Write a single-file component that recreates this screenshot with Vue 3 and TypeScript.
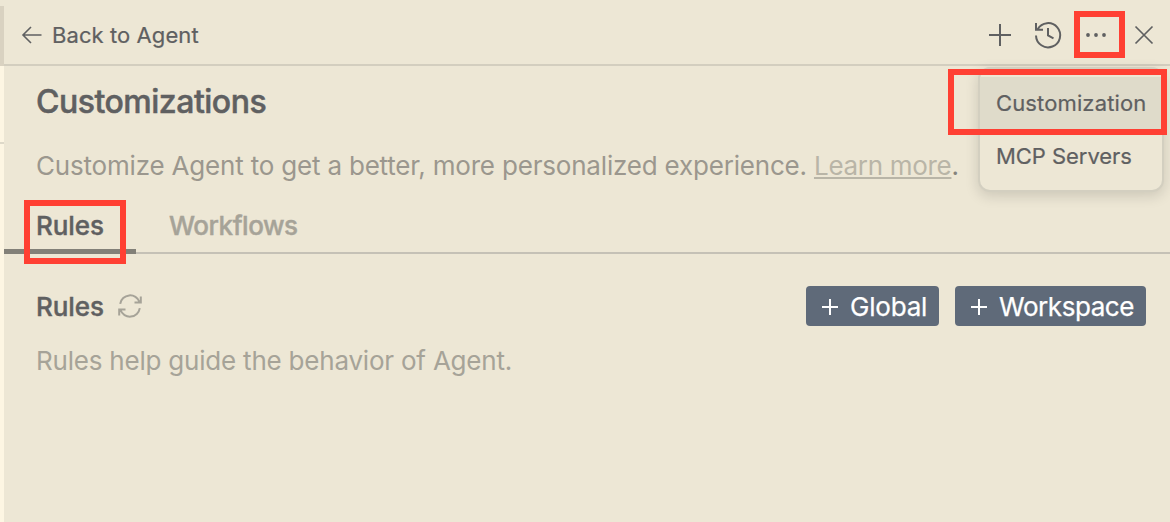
<script setup lang="ts">
    import { ref } from 'vue';

    const tabs = ['Rules', 'Workflows'];
    const menuItems = ['Customization', 'MCP Servers'];

    const activeTab = ref<string>('Rules');
    const activeItem = ref<string>('Customization');
    const menuOpen = ref<boolean>(true);

    const toggleMenu = () => {
        menuOpen.value = !menuOpen.value;
    }
</script>

<template>
    <div class="window">
        <div class="editor-edge">
            <div class="edge-top"></div>
            <div class="edge-body"></div>
        </div>
        <div class="panel">
            <header class="header">
                <div class="back">
                    <svg class="back-icon" width="20" height="18" viewBox="0 0 20 18">
                        <path d="M19.5 9H1M9 1L1 9L9 17" />
                    </svg>
                    <span class="back-text">Back to Agent</span>
                </div>
                <div class="actions">
                    <svg class="icon" width="22" height="22" viewBox="0 0 22 22">
                        <path d="M11 0V22M0 11H22" />
                    </svg>
                    <svg class="icon history" width="28" height="28" viewBox="0 0 28 28">
                        <path d="M2 14.5A12.1 12.1 0 1 0 3.6 8.2M2 2V8.8H9M14 7V14.5L19.5 17.4" />
                    </svg>
                    <svg class="icon dots" width="20" height="6" viewBox="0 0 20 6" @click="toggleMenu">
                        <circle cx="2" cy="3" r="1.9" />
                        <circle cx="10" cy="3" r="1.9" />
                        <circle cx="18" cy="3" r="1.9" />
                    </svg>
                    <svg class="icon close" width="18" height="18" viewBox="0 0 18 18">
                        <path d="M.5 .5L17.5 17.5M17.5 .5L.5 17.5" />
                    </svg>
                </div>
            </header>

            <section class="intro">
                <h1 class="title">Customizations</h1>
                <p class="description">Customize Agent to get a better, more personalized experience. <a class="link">Learn more</a><span class="stop">.</span></p>
            </section>

            <nav class="tabs">
                <div
                    v-for="tab in tabs"
                    :key="tab"
                    class="tab"
                    :class="{ active: tab === activeTab }"
                    @click="activeTab = tab"
                >
                    <span>{{ tab }}</span>
                </div>
            </nav>

            <section class="rules">
                <div class="rules-row">
                    <h2 class="rules-title">Rules</h2>
                    <svg class="refresh" width="24" height="22" viewBox="0 0 24 22">
                        <path d="M2.2 8.8A10 10 0 0 1 21.5 7M22.8 1.5V7.5H16.5M21.8 13.2A10 10 0 0 1 2.5 15M1.2 20.5V14.5H7.5" />
                    </svg>
                    <div class="buttons">
                        <button class="button">
                            <svg class="plus" width="16" height="16" viewBox="0 0 16 16"><path d="M8 0V16M0 8H16" /></svg>
                            <span class="global">Global</span>
                        </button>
                        <button class="button">
                            <svg class="plus" width="16" height="16" viewBox="0 0 16 16"><path d="M8 0V16M0 8H16" /></svg>
                            <span class="workspace">Workspace</span>
                        </button>
                    </div>
                </div>
                <p class="rules-text">Rules help guide the behavior of Agent.</p>
            </section>
        </div>

        <div v-if="menuOpen" class="menu">
            <div
                v-for="item in menuItems"
                :key="item"
                class="menu-item"
                :class="{ selected: item === activeItem }"
                @click="activeItem = item"
            >
                <span>{{ item }}</span>
            </div>
        </div>

        <div class="mark mark-dots"></div>
        <div class="mark mark-menu"></div>
        <div class="mark mark-tab"></div>
    </div>
</template>

<style>
    body {
        margin: 0;
        background: #ede7d5;
    }
</style>

<style scoped>
    .window {
        position: relative;
        box-sizing: border-box;
        width: 1170px;
        height: 522px;
        display: flex;
        overflow: hidden;
        background: #ede7d5;
        color: #5f6061;
        font-family: Inter, "Liberation Sans", sans-serif;
    }

    .editor-edge {
        width: 4px;
        padding-top: 6px;
        box-sizing: border-box;
        display: flex;
        flex-direction: column;
    }

    .edge-top {
        height: 60px;
        background: #d9d2c1;
    }

    .edge-body {
        flex: 1;
        background: linear-gradient(#ded9c9, #ded9c9) 0 76px / 4px 2px no-repeat #fdf6e3;
    }

    .panel {
        flex: 1;
        min-width: 0;
    }

    .header {
        box-sizing: border-box;
        height: 66px;
        padding: 4px 17px 0 18px;
        border-bottom: 2px solid #d3cebf;
        display: flex;
        justify-content: space-between;
        align-items: center;
    }

    .back {
        display: flex;
        align-items: center;
        gap: 10px;
        padding-top: 2px;
    }

    .back-text {
        font-size: 22px;
        line-height: 28px;
        letter-spacing: 0.08px;
        -webkit-text-stroke: 0.2px;
    }

    svg {
        display: block;
        flex: none;
        overflow: visible;
        fill: none;
        stroke: #5f6061;
        stroke-width: 2;
    }

    .back-icon {
        stroke-width: 1.6;
    }

    .actions {
        display: flex;
        align-items: center;
        padding-top: 2px;
    }

    .history {
        margin-left: 23px;
    }

    .dots {
        margin-left: 24px;
        fill: #5f6061;
        stroke: none;
    }

    .close {
        margin-left: 29px;
        stroke-width: 1.7;
    }

    .intro {
        padding: 16px 32px 0;
    }

    h1, h2, p {
        margin: 0;
    }

    .title {
        font-size: 32px;
        line-height: 40px;
        font-weight: 500;
        letter-spacing: -0.5px;
        -webkit-text-stroke: 0.5px;
    }

    .description {
        margin-top: 28px;
        font-size: 26px;
        line-height: 32px;
        letter-spacing: -0.19px;
        white-space: nowrap;
        color: #9b978e;
    }

    .link {
        letter-spacing: -0.3px;
        color: #b9b5a7;
        text-decoration: underline;
        text-decoration-thickness: 2px;
        text-underline-offset: 2px;
        text-decoration-skip-ink: none;
    }

    .stop {
        color: #85837c;
    }

    .tabs {
        height: 70px;
        margin-top: 2px;
        display: flex;
        box-shadow: inset 0 -2px #c5c1b6;
    }

    .tab {
        box-sizing: border-box;
        height: 70px;
        padding: 24px 32px 0 33px;
        font-size: 26px;
        line-height: 36px;
        font-weight: 500;
        letter-spacing: -0.45px;
        -webkit-text-stroke: 0.4px;
        color: #a6a398;
    }

    .tab.active {
        width: 132px;
        padding-left: 32px;
        letter-spacing: -0.1px;
        color: #5f6061;
        border-bottom: 5px solid #828078;
    }

    .rules {
        padding: 32px 24px 0 32px;
    }

    .rules-row {
        display: flex;
        align-items: center;
        height: 40px;
    }

    .rules-title {
        width: 68px;
        padding-top: 2px;
        font-size: 26px;
        line-height: 38px;
        font-weight: 500;
        letter-spacing: -0.1px;
        -webkit-text-stroke: 0.4px;
    }

    .refresh {
        margin-left: 14px;
        stroke: #a6a398;
    }

    .buttons {
        margin-left: auto;
        display: flex;
        gap: 16px;
    }

    .button {
        height: 40px;
        padding: 2px 12px 0 16px;
        border: none;
        border-radius: 4px;
        display: flex;
        align-items: center;
        gap: 12px;
        background: #5f6a79;
        color: #fff;
        font-family: inherit;
        font-size: 26px;
        line-height: 32px;
        -webkit-text-stroke: 0.25px;
    }

    .global {
        width: 77px;
        letter-spacing: -0.2px;
    }

    .workspace {
        width: 135px;
        letter-spacing: -0.45px;
    }

    .plus {
        stroke: #fff;
    }

    .rules-text {
        margin-top: 19px;
        font-size: 26px;
        line-height: 32px;
        letter-spacing: -0.21px;
        color: #a6a398;
    }

    .menu {
        position: absolute;
        left: 978px;
        top: 67px;
        box-sizing: border-box;
        width: 186px;
        height: 125px;
        padding: 8px 0;
        border: 2px solid #d3cfc0;
        border-radius: 12px;
        background: #ede7d5;
        box-shadow: 0 4px 14px rgba(0, 0, 0, 0.14);
        font-size: 22px;
        line-height: 53px;
        -webkit-text-stroke: 0.2px;
    }

    .menu-item {
        padding-left: 16px;
        height: 53px;
        white-space: nowrap;
        letter-spacing: -0.05px;
    }

    .selected {
        background: #dfdbca;
        letter-spacing: 0.13px;
    }

    .mark {
        position: absolute;
        box-sizing: border-box;
        border: 6px solid #ff4033;
        pointer-events: none;
    }

    .mark-dots {
        left: 1074px;
        top: 11px;
        width: 51px;
        height: 47px;
    }

    .mark-menu {
        left: 948px;
        top: 69px;
        width: 219px;
        height: 66px;
    }

    .mark-tab {
        left: 24px;
        top: 200px;
        width: 102px;
        height: 64px;
    }
</style>
